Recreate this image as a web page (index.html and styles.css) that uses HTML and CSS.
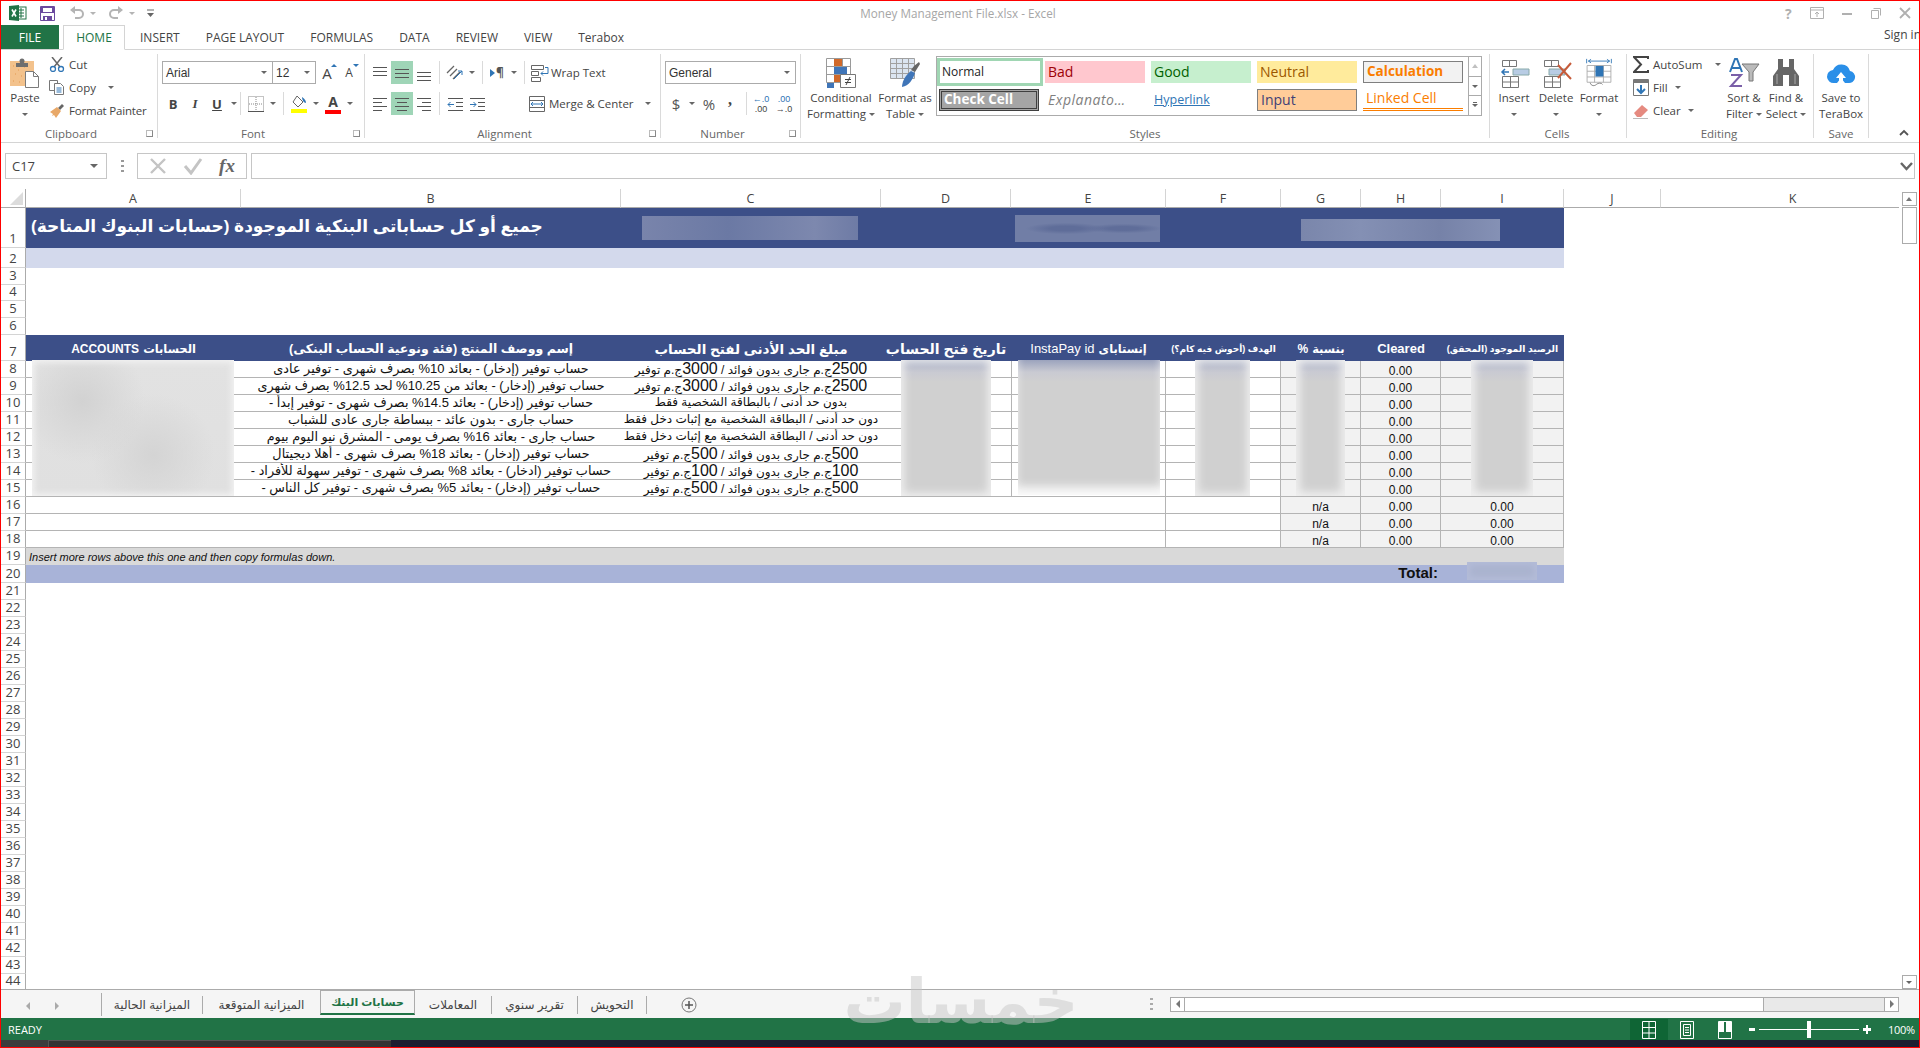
FILE: index.html
```html
<!DOCTYPE html>
<html lang="en">
<head>
<meta charset="utf-8">
<title>Money Management File.xlsx - Excel</title>
<link rel="stylesheet" href="styles.css">
</head>
<body>
<div class="window">

  <header class="titlebar">
    <div class="qat">
      <svg class="q-xl" width="18" height="16" viewBox="0 0 18 16"><rect x="7" y="2" width="10" height="12" fill="#fff" stroke="#217346"/><path d="M9 5h6M9 8h6M9 11h6M12 3v10" stroke="#217346"/><path d="M0 1l10-1v16L0 15z" fill="#217346"/><path d="M3 4.500l4 7M7 4.500l-4 7" stroke="#fff" stroke-width="1.600"/></svg>
      <svg class="q-save" width="15" height="15" viewBox="0 0 15 15"><path d="M.5.5h14v14H.5z" fill="#fff" stroke="#6b4a9e"/><path d="M1 1h13v6H1zM3 10h9v5H3z" fill="#6b4a9e"/><path d="M3 2h9v4H3z" fill="#fff"/><path d="M5 11h2v3H5z" fill="#fff"/></svg>
      <svg class="q-undo" width="14" height="14" viewBox="0 0 14 14"><path d="M4 4h5a4 4 0 0 1 0 8H5" fill="none" stroke="#b4b4b4" stroke-width="2"/><path d="M5 0v8L0 4z" fill="#b4b4b4"/></svg>
      <span class="dd q-d1 light"></span>
      <svg class="q-redo" width="14" height="14" viewBox="0 0 14 14"><path d="M10 4H5a4 4 0 0 0 0 8h4" fill="none" stroke="#b4b4b4" stroke-width="2"/><path d="M9 0v8l5-4z" fill="#b4b4b4"/></svg>
      <span class="dd q-d2 light"></span>
      <svg class="q-cust" width="7" height="9" viewBox="0 0 7 9"><path d="M0 1h7" stroke="#666"/><path d="M0 4h7L3.500 8z" fill="#666"/></svg>
    </div>
    <div class="doc-title">Money Management File.xlsx - Excel</div>
    <div class="winbtns">
      <span class="wb-help">?</span>
      <svg width="14" height="12" viewBox="0 0 14 12"><path d="M.5.5h13v11H.500zM1 3h12" fill="none" stroke="#b0b0b0"/><path d="M7 10V5M5 7l2-2 2 2" fill="none" stroke="#b0b0b0"/></svg>
      <svg width="10" height="12" viewBox="0 0 10 12"><path d="M0 7h10" stroke="#b0b0b0" stroke-width="2"/></svg>
      <svg width="10" height="12" viewBox="0 0 10 12"><path d="M2.500 1.500h7v7M.5 3.500h7v8h-7z" fill="none" stroke="#b0b0b0"/></svg>
      <svg width="12" height="12" viewBox="0 0 12 12"><path d="M1 1l10 10M11 1L1 11" stroke="#b0b0b0" stroke-width="1.800"/></svg>
    </div>
  </header>

  <nav class="tabs">
    <div class="tab-file">FILE</div>
    <div class="tab tab-on">HOME</div>
    <div class="tab">INSERT</div>
    <div class="tab">PAGE LAYOUT</div>
    <div class="tab">FORMULAS</div>
    <div class="tab">DATA</div>
    <div class="tab">REVIEW</div>
    <div class="tab">VIEW</div>
    <div class="tab">Terabox</div>
    <div class="signin">Sign in</div>
  </nav>

  <section class="ribbon">

    <div class="group g-clip">
      <div class="body">
        <div class="big w-paste">
          <svg width="30" height="30" viewBox="0 0 30 30"><rect y="3" width="24" height="25" fill="#f3c28c"/><path d="M3 8h1M8 12h1M14 9h1M5 16h1M11 18h1M17 14h1M3 23h1M9 24h1M15 22h1" stroke="#e39a50"/><path d="M6 5h12v4H6z" fill="#6e6e6e"/><circle cx="12" cy="3" r="2.500" fill="#6e6e6e"/><path d="M15.500 13.500h8l5 5v11h-13z" fill="#fff" stroke="#7b7b7b"/><path d="M23.500 13.500v5h5" fill="none" stroke="#7b7b7b"/></svg>
          <span class="lbl">Paste</span><span class="lbl"><i class="dd"></i></span>
        </div>
        <div class="list">
          <div class="li"><svg width="16" height="15" viewBox="0 0 16 15"><path d="M3 0l8 10M13 0L5 10" stroke="#666" stroke-width="1.500"/><circle cx="4" cy="12" r="2.500" fill="none" stroke="#2f75b5" stroke-width="1.300"/><circle cx="12" cy="12" r="2.500" fill="none" stroke="#2f75b5" stroke-width="1.300"/></svg>Cut</div>
          <div class="li"><svg width="16" height="15" viewBox="0 0 16 15"><path d="M.5.5h8v10h-8z" fill="#fff" stroke="#777"/><path d="M5.500 3.500h6l3 3v8h-9z" fill="#fff" stroke="#777"/><path d="M7.500 8h5M7.500 10h5M7.500 12h5" stroke="#2f75b5"/></svg>Copy<i class="dd dd-copy"></i></div>
          <div class="li"><svg width="16" height="15" viewBox="0 0 16 15"><path d="M9 5l4-4 2 2-4 4z" fill="#666"/><path d="M1 9l7-5 4 4-5 7-2-3-2 1 1-2z" fill="#e8a868"/></svg><span class="tight">Format Painter</span></div>
        </div>
      </div>
      <div class="gl">Clipboard<i class="launch"></i></div>
    </div>

    <div class="group g-font">
      <div class="body rows">
        <div class="row">
          <div class="combo c-font">Arial<i class="dd"></i></div>
          <div class="combo c-size">12<i class="dd"></i></div>
          <div class="b w22 grow">A<i class="up"></i></div>
          <div class="b w22 shrink">A<i class="down"></i></div>
        </div>
        <div class="row">
          <div class="b w22 bold">B</div>
          <div class="b w22 ital">I</div>
          <div class="b w22 undl">U</div>
          <div class="b w12"><i class="dd"></i></div>
          <i class="sep"></i>
          <div class="b w22 ml4"><svg width="16" height="16" viewBox="0 0 16 16"><path d="M.5.5h15v15H.500zM8 1v14M1 8h14" fill="none" stroke="#888" stroke-dasharray="1 1"/><path d="M0 15.500h16" stroke="#555"/></svg></div>
          <div class="b w12"><i class="dd"></i></div>
          <i class="sep ml4"></i>
          <div class="b w22 ml4"><svg width="18" height="18" viewBox="0 0 18 18"><path d="M7 1l6 6-5 5-5-5z" fill="#fff" stroke="#666"/><path d="M12 2c3 2 4 4 4 6-2 0-4-3-4-6z" fill="#2f75b5"/><path d="M1 14h16v4H1z" fill="#ff0"/></svg></div>
          <div class="b w12"><i class="dd"></i></div>
          <div class="b w22 colorA">A</div>
          <div class="b w12"><i class="dd"></i></div>
        </div>
      </div>
      <div class="gl">Font<i class="launch"></i></div>
    </div>

    <div class="group g-align">
      <div class="body rows">
        <div class="row">
          <div class="b w22"><svg width="16" height="12" viewBox="0 0 16 12"><path d="M1 .5h14M1 4.500h14M1 8.500h14" stroke="#555"/></svg></div>
          <div class="b w22 on"><svg width="16" height="12" viewBox="0 0 16 12"><path d="M1 2.500h14M1 6.500h14M1 10.500h14" stroke="#555"/></svg></div>
          <div class="b w22"><svg width="16" height="16" viewBox="0 0 16 16"><path d="M1 7.500h14M1 11.500h14M1 15.500h14" stroke="#555"/></svg></div>
          <i class="sep ml4"></i>
          <div class="b w22 ml4"><svg width="18" height="18" viewBox="0 0 18 18"><path d="M1 9l7-7M4 12l7-7M7 15l7-7" stroke="#666" stroke-width="1.300"/><path d="M8 15l8-8M16 7v4M16 7h-4" fill="none" stroke="#2f75b5"/></svg></div>
          <div class="b w12"><i class="dd"></i></div>
          <i class="sep ml4"></i>
          <div class="b w22 ml3 rtlp"><i class="tri"></i>¶</div>
          <div class="b w12"><i class="dd"></i></div>
          <i class="sep ml4"></i>
          <div class="wide wrapt"><svg width="18" height="18" viewBox="0 0 18 18"><path d="M.5 1.500h12v4H.5zM.5 7.500h7v4H.5zM.5 13.500h9v4H.5z" fill="none" stroke="#666"/><path d="M17 9.500h-7M12 7.500l-2 2 2 2M14 3.500h3v6" fill="none" stroke="#2f75b5"/></svg>Wrap Text</div>
        </div>
        <div class="row">
          <div class="b w22"><svg width="16" height="14" viewBox="0 0 16 14"><path d="M1 1.500h14M1 5.500h9M1 9.500h14M1 13.500h9" stroke="#555"/></svg></div>
          <div class="b w22 on"><svg width="16" height="14" viewBox="0 0 16 14"><path d="M1 1.500h14M3 5.500h10M1 9.500h14M3 13.500h10" stroke="#555"/></svg></div>
          <div class="b w22"><svg width="16" height="14" viewBox="0 0 16 14"><path d="M1 1.500h14M6 5.500h9M1 9.500h14M6 13.500h9" stroke="#555"/></svg></div>
          <i class="sep ml4"></i>
          <div class="b w22 ml4"><svg width="16" height="14" viewBox="0 0 16 14"><path d="M1 1.500h15M9 5.500h7M9 9.500h7M1 13.500h15" stroke="#555"/><path d="M7 7.500H1M3.500 5L1 7.500 3.500 10" fill="none" stroke="#2f75b5"/></svg></div>
          <div class="b w22"><svg width="16" height="14" viewBox="0 0 16 14"><path d="M1 1.500h15M9 5.500h7M9 9.500h7M1 13.500h15" stroke="#555"/><path d="M1 7.500h6M4.500 5L7 7.500 4.500 10" fill="none" stroke="#2f75b5"/></svg></div>
          <div class="wide merge"><svg width="18" height="18" viewBox="0 0 18 18"><path d="M.5 1.500h15v15H.500zM.5 5.500h15M.5 12.500h15" fill="none" stroke="#666"/><path d="M2 9h12M4 7L2 9l2 2M12 7l2 2-2 2" fill="none" stroke="#2f75b5"/></svg>Merge &amp; Center<i class="dd dd-merge"></i></div>
        </div>
      </div>
      <div class="gl">Alignment<i class="launch"></i></div>
    </div>

    <div class="group g-num">
      <div class="body rows">
        <div class="row"><div class="combo c-gen">General<i class="dd"></i></div></div>
        <div class="row">
          <div class="b w22 big-s">$</div>
          <div class="b w10"><i class="dd"></i></div>
          <div class="b w24 big-s">%</div>
          <div class="b w18 comma">,</div>
          <i class="sep ml7"></i>
          <div class="b w22 ml3 dec"><i class="d-top">←.0</i><i>.00</i></div>
          <div class="b w22 ml1 dec"><i class="d-top">.00</i><i>→.0</i></div>
        </div>
      </div>
      <div class="gl">Number<i class="launch"></i></div>
    </div>

    <div class="group g-styles">
      <div class="body">
        <div class="big w64">
          <svg width="30" height="30" viewBox="0 0 30 30"><path d="M.5.5h24v24H.500zM.5 8.500h24M.5 16.500h24M8.500.5v24M16.500.5v24" fill="none" stroke="#9a9a9a"/><path d="M8 1h8v7H8z" fill="#d0692a"/><path d="M8 9h13v7H8z" fill="#3f75b8"/><path d="M8 17h6v7H8z" fill="#d0692a"/><path d="M1 25h7v5H1z" fill="#3f75b8"/><path d="M14.500 16.500h15v13h-15z" fill="#fff" stroke="#777"/><path d="M19 21.500h6M19 24.500h6M24 19l-4 8" stroke="#444"/></svg>
          <span class="lbl">Conditional</span><span class="lbl">Formatting<i class="dd dd-in"></i></span>
        </div>
        <div class="big w64">
          <svg width="30" height="30" viewBox="0 0 30 30"><path d="M.5.5h24v20H.500zM.5 5.500h24M.5 10.500h24M.5 15.500h24M6.500.5v20M12.500.5v20M18.500.5v20" fill="#dbe5f1" stroke="#a0a0a0"/><path d="M24 8l5-4 1 2-5 8-4-2z" fill="#666"/><path d="M12 29c0-7 5-13 9-16l4 2c-2 6-6 13-13 14z" fill="#3f75b8"/></svg>
          <span class="lbl">Format as</span><span class="lbl">Table<i class="dd dd-in"></i></span>
        </div>
        <div class="gallery">
          <div class="sg-grid">
            <div class="sg s-normal">Normal</div>
            <div class="sg s-bad">Bad</div>
            <div class="sg s-good">Good</div>
            <div class="sg s-neutral">Neutral</div>
            <div class="sg s-calc">Calculation</div>
            <div class="sg s-check">Check Cell</div>
            <div class="sg s-expl">Explanato…</div>
            <div class="sg s-link"><span>Hyperlink</span></div>
            <div class="sg s-input">Input</div>
            <div class="sg s-linked">Linked Cell</div>
          </div>
          <div class="sg-scroll">
            <div class="ss"><i class="ss-up"></i></div>
            <div class="ss"><i class="dd"></i></div>
            <div class="ss ss-more"><i class="dd"></i></div>
          </div>
        </div>
      </div>
      <div class="gl">Styles</div>
    </div>

    <div class="group g-cells">
      <div class="body">
        <div class="big w42">
          <svg width="30" height="30" viewBox="0 0 30 30"><path d="M3.500 2.500h14v6h-14zM10.500 2.500v6M3.500 18.500h16v11h-16zM3.500 24h16M11.500 18.500v11" fill="none" stroke="#777"/><path d="M14 11h16v6H14z" fill="#b8cce4" stroke="#8aa"/><path d="M10 14H3M6 11l-3 3 3 3" fill="none" stroke="#2f75b5" stroke-width="1.500"/></svg>
          <span class="lbl">Insert</span><span class="lbl"><i class="dd"></i></span>
        </div>
        <div class="big w42">
          <svg width="30" height="30" viewBox="0 0 30 30"><path d="M3.500 2.500h14v6h-14zM10.500 2.500v6M3.500 18.500h16v11h-16zM3.500 24h16M11.500 18.500v11" fill="none" stroke="#777"/><path d="M8 11h16v6H8z" fill="#b8cce4" stroke="#8aa"/><path d="M17 7l13 14M30 5L17 20" stroke="#c65b3a" stroke-width="2"/></svg>
          <span class="lbl">Delete</span><span class="lbl"><i class="dd"></i></span>
        </div>
        <div class="big w44">
          <svg width="30" height="34" viewBox="0 0 30 34"><path d="M1 1v5M29 1v5M3 3.500h24M6 1.500l-3 2 3 2M24 1.500l3 2-3 2" fill="none" stroke="#2f75b5"/><path d="M1.500 8.500h27v19h-27zM1.500 15h27M1.500 21.500h27M10 8.500v19M20 8.500v19" fill="none" stroke="#aaa"/><path d="M11 9h9v12h-9z" fill="#2f75b5"/><path d="M5 28c1 4 5 4 7 2s6-2 7 0" fill="none" stroke="#777"/></svg>
          <span class="lbl">Format</span><span class="lbl"><i class="dd"></i></span>
        </div>
      </div>
      <div class="gl">Cells</div>
    </div>

    <div class="group g-edit">
      <div class="body">
        <div class="list l-edit">
          <div class="li"><svg width="16" height="17" viewBox="0 0 16 17"><path d="M15 3V1H1l7 7.500L1 16h14v-2" fill="none" stroke="#444" stroke-width="2"/></svg>AutoSum<i class="dd dd-auto"></i></div>
          <div class="li"><svg width="16" height="17" viewBox="0 0 16 17"><path d="M.5.500h15v16H.500z" fill="#fff" stroke="#777"/><path d="M1 1h14v3H1z" fill="#777"/><path d="M8 6v8M4 10l4 4 4-4" fill="none" stroke="#2f75b5" stroke-width="2"/></svg>Fill<i class="dd dd-in"></i></div>
          <div class="li"><svg width="16" height="16" viewBox="0 0 16 16"><path d="M1 10l8-8 6 5-7 7H4z" fill="#e58a80"/><path d="M0 15.500h15" stroke="#bbb"/></svg>Clear<i class="dd dd-in"></i></div>
        </div>
        <div class="big w42">
          <svg width="30" height="30" viewBox="0 0 30 30"><path d="M1 14L6 1h2l5 13M3 10h8" fill="none" stroke="#2f75b5" stroke-width="2"/><path d="M2 17h10L2 28h11" fill="none" stroke="#7a5fa8" stroke-width="2"/><path d="M13 6h17l-6 8v9h-4v-9z" fill="#bbb" stroke="#777"/></svg>
          <span class="lbl">Sort &amp;</span><span class="lbl">Filter<i class="dd dd-in"></i></span>
        </div>
        <div class="big w42">
          <svg width="30" height="30" viewBox="0 0 30 30"><path d="M7 1h5v8h6V1h5v10l5 7v10H18v-11h-6v11H2V18l5-7z" fill="#666"/><path d="M6 16v10M24 16v10" stroke="#aaa"/></svg>
          <span class="lbl">Find &amp;</span><span class="lbl">Select<i class="dd dd-in"></i></span>
        </div>
      </div>
      <div class="gl">Editing</div>
    </div>

    <div class="group g-save">
      <div class="body">
        <div class="big w55">
          <svg class="cloud" width="28" height="24" viewBox="0 0 28 24"><path d="M7 22a6.500 6.500 0 0 1-1-13 9 9 0 0 1 17 1 6 6 0 0 1-2 12h-3l-4-5-4 5z" fill="#2a8fe8"/><path d="M14 11l-5 6h3v5h4v-5h3z" fill="#fff"/></svg>
          <span class="lbl">Save to</span><span class="lbl">TeraBox</span>
        </div>
      </div>
      <div class="gl">Save</div>
    </div>

    <svg class="collapse" width="10" height="7" viewBox="0 0 10 7"><path d="M1 6l4-4 4 4" fill="none" stroke="#555" stroke-width="1.800"/></svg>
  </section>

  <section class="formula">
    <div class="namebox">C17<i class="dd"></i></div>
    <div class="grip"></div>
    <div class="fbtns">
      <svg width="18" height="18" viewBox="0 0 18 18"><path d="M2 2l14 14M16 2L2 16" stroke="#c4c4c4" stroke-width="2.400"/></svg>
      <svg width="20" height="18" viewBox="0 0 20 18"><path d="M2 9l6 7L18 2" fill="none" stroke="#c4c4c4" stroke-width="3"/></svg>
      <span class="fx">fx</span>
    </div>
    <div class="finput"><svg width="13" height="9" viewBox="0 0 13 9"><path d="M1 1l5.500 6L12 1" fill="none" stroke="#666" stroke-width="2.400"/></svg></div>
  </section>

  <section class="sheetarea">
    <div class="sheet">
      <div class="corner"><i></i></div>
      <div class="ch">A</div><div class="ch">B</div><div class="ch">C</div><div class="ch">D</div><div class="ch">E</div><div class="ch">F</div><div class="ch">G</div><div class="ch">H</div><div class="ch">I</div><div class="ch">J</div><div class="ch">K</div>

      <div class="rh">1</div><div class="band-title" dir="rtl">جميع أو كل حساباتى البنكية الموجودة (حسابات البنوك المتاحة)</div>
      <div class="rh">2</div><div class="band-sub"></div>
      <div class="rh">3</div><div class="rh">4</div><div class="rh">5</div><div class="rh">6</div>

      <div class="rh">7</div>
      <div class="hd" dir="rtl"><span class="hd-ar">الحسابات</span> <span class="hd-en">ACCOUNTS</span></div>
      <div class="hd hd-b" dir="rtl">إسم ووصف المنتج (فئة ونوعية الحساب البنكى)</div>
      <div class="hd hd-c" dir="rtl">مبلغ الحد الأدنى لفتح الحساب</div>
      <div class="hd hd-d" dir="rtl">تاريخ فتح الحساب</div>
      <div class="hd" dir="rtl"><span class="hd-ar">إنستاباى</span> <span class="hd-en hd-ip">InstaPay id</span></div>
      <div class="hd hd-f" dir="rtl">الهدف (أحوش فيه كام؟)</div>
      <div class="hd" dir="rtl"><span class="hd-ar">بنسبة</span> <span class="hd-en">%</span></div>
      <div class="hd hd-cl">Cleared</div>
      <div class="hd hd-i" dir="rtl">الرصيد الموجود (المحقق)</div>

      <div class="rh">8</div><div class="c"></div><div class="c b-t" dir="rtl">حساب توفير (إدخار) - بعائد <span class="n">10%</span> بصرف شهرى - توفير عادى</div><div class="c c-t" dir="rtl"><span class="m">2500</span>ج.م جارى بدون فوائد / <span class="m">3000</span>ج.م توفير</div><div class="c"></div><div class="c vl vr"></div><div class="c vr"></div><div class="c g vr"></div><div class="c g vr num">0.00</div><div class="c g vr"></div>
      <div class="rh">9</div><div class="c"></div><div class="c b-t" dir="rtl">حساب توفير (إدخار) - بعائد من <span class="n">10.25%</span> لحد <span class="n">12.5%</span> بصرف شهرى</div><div class="c c-t" dir="rtl"><span class="m">2500</span>ج.م جارى بدون فوائد / <span class="m">3000</span>ج.م توفير</div><div class="c"></div><div class="c vl vr"></div><div class="c vr"></div><div class="c g vr"></div><div class="c g vr num">0.00</div><div class="c g vr"></div>
      <div class="rh">10</div><div class="c"></div><div class="c b-t" dir="rtl">حساب توفير (إدخار) - بعائد <span class="n">14.5%</span> بصرف شهرى - توفير إبدأ -</div><div class="c c-t" dir="rtl">بدون حد أدنى / بالبطاقة الشخصية فقط</div><div class="c"></div><div class="c vl vr"></div><div class="c vr"></div><div class="c g vr"></div><div class="c g vr num">0.00</div><div class="c g vr"></div>
      <div class="rh">11</div><div class="c"></div><div class="c b-t" dir="rtl">حساب جارى - بدون عائد - ببساطة جارى عادى للشباب</div><div class="c c-t" dir="rtl">دون حد أدنى / البطاقة الشخصية مع إثبات دخل فقط</div><div class="c"></div><div class="c vl vr"></div><div class="c vr"></div><div class="c g vr"></div><div class="c g vr num">0.00</div><div class="c g vr"></div>
      <div class="rh">12</div><div class="c"></div><div class="c b-t" dir="rtl">حساب جارى - بعائد <span class="n">16%</span> بصرف يومى - المشرق نيو اليوم بيوم</div><div class="c c-t" dir="rtl">دون حد أدنى / البطاقة الشخصية مع إثبات دخل فقط</div><div class="c"></div><div class="c vl vr"></div><div class="c vr"></div><div class="c g vr"></div><div class="c g vr num">0.00</div><div class="c g vr"></div>
      <div class="rh">13</div><div class="c"></div><div class="c b-t" dir="rtl">حساب توفير (إدخار) - بعائد <span class="n">18%</span> بصرف شهرى - أهلا ديجيتال</div><div class="c c-t" dir="rtl"><span class="m">500</span>ج.م جارى بدون فوائد / <span class="m">500</span>ج.م توفير</div><div class="c"></div><div class="c vl vr"></div><div class="c vr"></div><div class="c g vr"></div><div class="c g vr num">0.00</div><div class="c g vr"></div>
      <div class="rh">14</div><div class="c"></div><div class="c b-t" dir="rtl">حساب توفير (ادخار) - بعائد <span class="n">8%</span> بصرف شهرى - توفير سهولة للأفراد -</div><div class="c c-t" dir="rtl"><span class="m">100</span>ج.م جارى بدون فوائد / <span class="m">100</span>ج.م توفير</div><div class="c"></div><div class="c vl vr"></div><div class="c vr"></div><div class="c g vr"></div><div class="c g vr num">0.00</div><div class="c g vr"></div>
      <div class="rh">15</div><div class="c"></div><div class="c b-t" dir="rtl">حساب توفير (إدخار) - بعائد <span class="n">5%</span> بصرف شهرى - توفير كل الناس -</div><div class="c c-t" dir="rtl"><span class="m">500</span>ج.م جارى بدون فوائد / <span class="m">500</span>ج.م توفير</div><div class="c"></div><div class="c vl vr"></div><div class="c vr"></div><div class="c g vr"></div><div class="c g vr num">0.00</div><div class="c g vr"></div>
      <div class="rh">16</div><div class="c merged vr"></div><div class="c vr"></div><div class="c g vr num">n/a</div><div class="c g vr num">0.00</div><div class="c g vr num">0.00</div>
      <div class="rh">17</div><div class="c merged vr"></div><div class="c vr"></div><div class="c g vr num">n/a</div><div class="c g vr num">0.00</div><div class="c g vr num">0.00</div>
      <div class="rh">18</div><div class="c merged vr"></div><div class="c vr"></div><div class="c g vr num">n/a</div><div class="c g vr num">0.00</div><div class="c g vr num">0.00</div>
      <div class="rh">19</div><div class="note">Insert more rows above this one and then copy formulas down.</div>
      <div class="rh">20</div><div class="total">Total:</div>
      <div class="rh">21</div><div class="rh">22</div><div class="rh">23</div><div class="rh">24</div><div class="rh">25</div><div class="rh">26</div><div class="rh">27</div><div class="rh">28</div><div class="rh">29</div><div class="rh">30</div><div class="rh">31</div><div class="rh">32</div><div class="rh">33</div><div class="rh">34</div><div class="rh">35</div><div class="rh">36</div><div class="rh">37</div><div class="rh">38</div><div class="rh">39</div><div class="rh">40</div><div class="rh">41</div><div class="rh">42</div><div class="rh">43</div><div class="rh">44</div>

      <div class="smear t-c"></div><div class="smear t-e"></div><div class="smear t-g"></div><div class="smear t-total"></div>
      <div class="patch p-a"></div><div class="patch p-d"></div><div class="patch p-e"></div><div class="patch p-f"></div><div class="patch p-g"></div><div class="patch p-i"></div>
    </div>
    <aside class="vscroll">
      <div class="vbtn"><i class="ss-up"></i></div>
      <div class="vthumb"></div>
      <div class="vtrack"></div>
      <div class="vbtn"><i class="dd"></i></div>
    </aside>
  </section>

  <footer class="sheettabs">
    <div class="navs"><i class="nav-l"></i><i class="nav-r"></i></div>
    <div class="stabs">
      <div class="stab">الميزانية الحالية</div>
      <div class="stab">الميزانية المتوقعة</div>
      <div class="stab stab-on">حسابات البنك</div>
      <div class="stab">المعاملات</div>
      <div class="stab">تقرير سنوي</div>
      <div class="stab">التحويش</div>
    </div>
    <svg class="addsheet" width="16" height="16" viewBox="0 0 16 16"><circle cx="8" cy="8" r="7" fill="none" stroke="#777"/><path d="M8 4v8M4 8h8" stroke="#555" stroke-width="1.500"/></svg>
    <div class="hwrap">
      <div class="hgrip"></div>
      <div class="hscroll">
        <div class="hbtn"><i class="nav-l"></i></div>
        <div class="hthumb"></div>
        <div class="htrack"></div>
        <div class="hbtn hbtn-r"><i class="nav-r"></i></div>
      </div>
    </div>
  </footer>

  <div class="status">
    <div class="ready">READY</div>
    <div class="views">
      <div class="view view-on"><svg width="14" height="18" viewBox="0 0 14 18"><path d="M.5.500h13v17H.500zM.5 6.500h13M.5 12h13M7 .5v17" fill="none" stroke="#fff"/></svg></div>
      <div class="view"><svg width="14" height="18" viewBox="0 0 14 18"><path d="M.5.500h13v17H.500z" fill="none" stroke="#fff"/><path d="M3.500 3.500h7v11h-7zM5 6.500h4M5 9h4M5 11.500h4" fill="none" stroke="#fff"/></svg></div>
      <div class="view"><svg width="14" height="18" viewBox="0 0 14 18"><path d="M.5.500h13v17H.500z" fill="none" stroke="#fff"/><path d="M1 1h5v10H1zM8 1h5v10H8z" fill="#fff"/></svg></div>
    </div>
    <div class="zoombar">
      <i class="z-minus"></i>
      <div class="z-track"><i class="z-thumb"></i></div>
      <i class="z-plus"></i>
    </div>
    <div class="zoompct">100%</div>
  </div>
  <div class="taskbar"><i class="tk-a"></i><i class="tk-b"></i></div>

  <div class="watermark" dir="rtl">خمسات</div>
</div>
</body>
</html>
```

FILE: styles.css
```css
*{box-sizing:border-box}
html,body{margin:0;padding:0;height:100%;overflow:hidden}
body{font-family:"Open Sans","Liberation Sans","DejaVu Sans",sans-serif;font-size:12px;color:#444;background:#fff}
i{font-style:normal}
.window{width:1920px;height:1048px;border:1px solid #f00;display:flex;flex-direction:column;position:relative;overflow:hidden;background:#fff}

.dd{display:inline-block;width:0;height:0;border-left:3px solid transparent;border-right:3px solid transparent;border-top:3px solid #666}
.dd.light{border-top-color:#b4b4b4}

.titlebar{height:24px;flex:none;display:flex;align-items:center;position:relative}
.qat{display:flex;align-items:center;width:170px}
.q-xl{margin-left:8px}
.q-save{margin-left:13px}
.q-undo{margin-left:15px}
.q-d1{margin-left:6px}
.q-redo{margin-left:13px}
.q-d2{margin-left:6px}
.q-cust{margin-left:12px}
.doc-title{flex:1;text-align:center;color:#a6a6a6;font-size:11.700px;padding-right:40px}
.winbtns{display:flex;align-items:center;gap:0;width:134px;justify-content:space-between;padding-right:8px}
.wb-help{font-weight:700;color:#b0b0b0;font-size:14px}

.tabs{height:25px;flex:none;display:flex;align-items:stretch;border-bottom:1px solid #d4d4d4;font-size:12px;color:#444}
.tab-file{width:58px;background:#217346;color:#fff;display:flex;align-items:center;justify-content:center;margin-right:4px}
.tab{padding:0 13px;display:flex;align-items:center;white-space:nowrap}
.tab-on{color:#217346;border:1px solid #d4d4d4;border-bottom:1px solid #fff;height:25px;padding:0;width:62px;justify-content:center;background:#fff;margin-right:2px}
.signin{margin-left:auto;margin-right:-3px;display:flex;align-items:center;width:38px;white-space:nowrap;overflow:hidden;padding-bottom:6px}

.ribbon{height:93px;flex:none;display:flex;border-bottom:1px solid #d4d4d4;padding-top:4px;position:relative;background:#fff}
.group{height:84px;flex:none;border-right:1px solid #dadada;display:flex;flex-direction:column}
.g-clip{width:157px}
.g-font{width:207px}
.g-align{width:296px}
.g-num{width:140px}
.g-styles{width:689px}
.g-cells{width:137px}
.g-edit{width:187px}
.g-save{width:55px}
.body{height:72px;flex:none;display:flex}
.gl{height:16px;flex:none;line-height:16px;text-align:center;color:#666;font-size:11.500px;position:relative;white-space:nowrap}
.g-clip .gl,.g-font .gl,.g-align .gl,.g-num .gl{padding-right:16px}
.g-cells .gl,.g-edit .gl{padding-right:2px}
.launch{position:absolute;right:4px;top:4px;width:7px;height:7px;border:1px solid #888;border-top-color:#bbb;border-left-color:#bbb}
.collapse{position:absolute;right:10px;bottom:6px}

.big{display:flex;flex-direction:column;align-items:center;padding-top:4px;white-space:nowrap;flex:none}
.big svg{height:30px;margin-bottom:2px;overflow:visible}
.big .cloud{margin-top:3px;height:24px;margin-bottom:5px}
.lbl{display:flex;align-items:center;height:16px;line-height:16px;font-size:11.500px}
.w-paste{width:48px}
.w64{width:64px}
.w42{width:42px}
.w44{width:44px}
.w55{width:54px}
.g-styles .body{padding-left:8px}
.g-cells .body{padding-left:3px}
.dd-in{margin-left:3px}

.list{display:flex;flex-direction:column;margin-top:-1px}
.li{height:23px;display:flex;align-items:center;gap:4px;white-space:nowrap;font-size:11.500px}
.tight{letter-spacing:-.2px}
.dd-copy{margin-left:8px}
.dd-auto{margin-left:9px}
.l-edit{width:96px;padding-left:6px}

.rows{flex-direction:column;gap:8px;padding:7px 0 0 4px}
.row{height:23px;display:flex;align-items:center}
.b{height:23px;display:flex;align-items:center;justify-content:center;flex:none}
.w10{width:10px}.w12{width:12px}.w18{width:18px}.w22{width:22px}.w24{width:24px}
.ml1{margin-left:1px}.ml3{margin-left:3px}.ml4{margin-left:4px}.ml7{margin-left:7px}
.sep{width:1px;height:23px;background:#dadada;flex:none}
.on{background:#9fd5b7}
.combo{height:23px;border:1px solid #ababab;display:flex;align-items:center;justify-content:space-between;padding:0 5px 0 3px;color:#333;font-family:"Liberation Sans",sans-serif;font-size:12px;flex:none}
.c-font{width:111px}
.c-size{width:44px;margin-left:-1px;margin-right:1px}
.c-gen{width:131px}
.grow{font-size:15px;position:relative;padding-right:2px}
.shrink{font-size:12px;position:relative;padding-right:2px}
.up,.down{position:absolute;right:2px;top:3px;width:0;height:0;border-left:3px solid transparent;border-right:3px solid transparent}
.up{border-bottom:3px solid #2f75b5}
.down{border-top:3px solid #2f75b5}
.bold{font-weight:700;font-size:13px}
.ital{font-style:italic;font-size:13px;font-family:"Liberation Serif",serif;font-weight:700}
.undl{font-weight:700;font-size:13px;text-decoration:underline}
.colorA{font-weight:700;font-size:14px;position:relative;padding-bottom:4px}
.colorA::after{content:"";position:absolute;left:3px;right:3px;bottom:1px;height:4px;background:#f00}
.rtlp{color:#555;font-size:12px;font-weight:700}
.tri{width:0;height:0;border-top:4px solid transparent;border-bottom:4px solid transparent;border-left:5px solid #2f75b5;margin-right:1px}
.wide{display:flex;align-items:center;gap:3px;white-space:nowrap;font-size:11.500px}
.wrapt{margin-left:6px;gap:2px}
.merge{margin-left:41px;gap:2px}
.dd-merge{margin-left:9px}
.big-s{font-size:15px;color:#555}
.comma{font-size:16px;font-weight:800;font-family:"Liberation Serif",serif;padding-bottom:8px}
.dec{flex-direction:column;font-size:9px;line-height:10px;font-family:"Liberation Sans",sans-serif;color:#444}
.d-top{color:#2f75b5}

.gallery{width:546px;height:60px;margin:2px 0 0 -1px;border:1px solid #ababab;display:flex;flex:none}
.sg-grid{width:530px;display:grid;grid-template-columns:repeat(5,106px);grid-template-rows:29px 29px}
.sg{display:flex;align-items:center;padding:0 0 2px 3px;margin:4px 4px 3px 2px;font-size:14px;white-space:nowrap;overflow:hidden}
.sg:nth-child(n+6){margin:3px 4px 4px 2px}
.s-normal{margin:0;border:3px solid #a0d6b3;padding-left:2px;color:#222;font-size:12px;background:#fff;margin-top:1px}
.s-bad{background:#ffc7ce;color:#9c0006}
.s-good{background:#c6efce;color:#006100}
.s-neutral{background:#ffeb9c;color:#9c5700}
.s-calc{background:#f2f2f2;color:#fa7d00;font-weight:700;border:1px solid #7f7f7f;font-size:13.500px}
.sg.s-check{background:#a5a5a5;color:#fff;font-weight:700;border:3px double #3f3f3f;margin:3px 4px 4px 2px;font-size:13.500px;padding-left:2px}
.s-expl{color:#7f7f7f;font-style:italic;letter-spacing:.5px}
.s-link{color:#2f75b5;font-size:12.500px;text-decoration:underline}
.s-input{background:#fc9;color:#3f3f76;border:1px solid #7f7f7f}
.s-linked{color:#fa7d00;border-bottom:3px double #fa7d00}
.sg-scroll{flex:1;border-left:1px solid #ababab;display:flex;flex-direction:column;margin-left:1px}
.ss{flex:1;display:flex;align-items:center;justify-content:center;border-bottom:1px solid #ababab}
.ss:last-child{border-bottom:0}
.ss-more{position:relative}
.ss-more::before{content:"";position:absolute;top:6px;left:4px;right:4px;height:1px;background:#666}
.ss-up{width:0;height:0;border-left:3px solid transparent;border-right:3px solid transparent;border-bottom:4px solid #c0c0c0}

.formula{height:46px;flex:none;display:flex;padding:10px 0 0 4px}
.namebox{width:102px;height:26px;border:1px solid #c6c6c6;display:flex;align-items:center;justify-content:space-between;padding:0 8px 0 6px;font-size:13px;color:#444}
.namebox .dd{border-left-width:4px;border-right-width:4px;border-top-width:4px}
.grip{width:3px;height:12px;margin:7px 13px 0 14px;background:repeating-linear-gradient(#999 0 2px,transparent 2px 5px)}
.fbtns{width:110px;height:26px;border:1px solid #c6c6c6;display:flex;align-items:center;justify-content:space-around;padding:0 3px}
.fx{font-family:"Liberation Serif",serif;font-style:italic;font-weight:700;font-size:19px;color:#666}
.finput{width:1664px;height:26px;margin-left:4px;border:1px solid #c6c6c6;display:flex;align-items:center;justify-content:flex-end;padding-right:1px}

.sheetarea{height:801px;flex:none;display:flex;border-bottom:1px solid #ababab}
.sheet{width:1898px;height:800px;overflow:hidden;position:relative;display:grid;
  grid-template-columns:25px 215px 380px 260px 130px 155px 115px 80px 80px 123px 97px 264px;
  grid-template-rows:19px 40px 20px 17px 16px 17px 17px 26px repeat(12,17px) 18px repeat(23,17px) 16px;
  font-family:"Liberation Sans","DejaVu Sans",sans-serif}
.corner{border-right:1px solid #ababab;border-bottom:1px solid #ababab;position:relative}
.corner i{position:absolute;right:2px;bottom:2px;width:0;height:0;border-left:13px solid transparent;border-bottom:13px solid #dcdcdc}
.ch{border-right:1px solid #d4d4d4;border-bottom:1px solid #ababab;text-align:center;color:#444;font-size:12.500px;line-height:19px;font-family:"Open Sans",sans-serif}
.rh{grid-column:1;border-right:1px solid #ababab;border-bottom:1px solid #d4d4d4;color:#444;font-size:13px;display:flex;align-items:flex-end;justify-content:center;line-height:15px;padding-bottom:1px;font-family:"Open Sans",sans-serif}
.band-title{grid-column:2/11;background:#3c4f88;color:#fff;font-weight:700;font-size:17px;display:flex;align-items:center;justify-content:flex-end;padding:0 0 4px 5px;white-space:nowrap;overflow:hidden}
.band-sub{grid-column:2/11;background:#d3d9ec}
.hd{background:#3c4f88;color:#fff;font-weight:700;font-size:12px;display:flex;align-items:center;justify-content:center;gap:4px;white-space:nowrap;overflow:hidden;padding-top:1px}
.hd-ar{font-size:11.500px}
.hd-en{font-size:12px;font-weight:700}
.hd-ip{font-size:13px;font-weight:400}
.hd-b{font-size:12.500px}
.hd-c{font-size:13.500px}
.hd-d{font-size:14px}
.hd-f{font-size:9px}
.hd-cl{font-size:13px}
.hd-i{font-size:9.200px}
.c{border-bottom:1px solid #b4b4b4;display:flex;align-items:center;justify-content:center;white-space:nowrap;overflow:hidden;color:#111;font-size:12px;background:#fff;gap:0}
.b-t,.c-t{display:block;text-align:center;line-height:15px}
.b-t{font-size:12.800px}
.c-t{font-size:12px}
.n{font-size:13px}
.m{font-size:16px}
.g{background:#f2f2f2}
.vr{border-right:1px solid #b4b4b4}
.vl{border-left:1px solid #b4b4b4}
.num{font-size:12px;color:#111;padding-top:3px}
.merged{grid-column:2/7}
.note{grid-column:2/11;background:#d9d9d9;color:#111;font-style:italic;font-size:11px;display:flex;align-items:center;padding-left:3px;white-space:nowrap}
.total{grid-column:2/11;background:#a8b3d8;color:#111;font-weight:700;font-size:15px;text-align:right;padding-right:126px;line-height:16px}

.smear{position:absolute}
.t-c{left:641px;top:27px;width:216px;height:24px;background:linear-gradient(90deg,#7984ab,#6b79a4 40%,#7d88ae 80%,#6e7ba5)}
.t-e{left:1014px;top:26px;width:145px;height:27px;background:radial-gradient(ellipse at 35% 50%,#5f6d99 0 12%,transparent 30%),radial-gradient(ellipse at 75% 50%,#5f6d99 0 10%,transparent 25%),#717ea6}
.t-g{left:1300px;top:30px;width:199px;height:22px;background:linear-gradient(90deg,#7a86ab,#8490b4 30%,#7682a8 70%,#8591b5)}
.t-total{left:1466px;top:373px;width:70px;height:18px;background:#aab3cf;box-shadow:inset 0 0 6px 3px #b4bcd8}
.patch{position:absolute;top:171px;height:136px;box-shadow:inset 0 0 8px 3px #f0f0f0;background:linear-gradient(#9ba3bd 0,#c9cad2 12px,#d0d0d0 22px)}
.p-a{left:31px;width:202px;background:radial-gradient(circle at 25% 30%,#d2d2d2,transparent 35%),radial-gradient(circle at 60% 70%,#d4d4d4,transparent 40%),linear-gradient(#e2e2e2,#e0e0e0);box-shadow:inset 0 0 6px 2px #f4f4f4}
.p-d{left:900px;width:90px}
.p-e{left:1017px;width:142px;height:135px;box-shadow:inset 0 -10px 10px -2px #fafafa}
.p-f{left:1194px;width:55px}
.p-g{left:1295px;width:49px;box-shadow:inset 0 0 8px 4px #f0f0f0}
.p-i{left:1470px;width:62px;box-shadow:inset 0 0 8px 4px #f0f0f0}

.vscroll{width:20px;flex:none;display:flex;flex-direction:column;align-items:center;padding:3px 2px 0;background:#fff}
.vbtn{width:15px;height:14px;flex:none;border:1px solid #ababab;display:flex;align-items:center;justify-content:center;background:#fff}
.vbtn .ss-up{border-bottom-color:#777}
.vthumb{width:15px;height:37px;flex:none;border:1px solid #ababab;background:#fff;margin-top:1px}
.vtrack{flex:1}

.sheettabs{height:28px;flex:none;display:flex;background:#f5f5f5;position:relative}
.navs{width:100px;display:flex;align-items:center;padding-left:25px;gap:25px;height:25px;margin-top:3px}
.nav-l,.nav-r{width:0;height:0;border-top:4px solid transparent;border-bottom:4px solid transparent}
.nav-l{border-right:4px solid #aaa}
.nav-r{border-left:4px solid #aaa}
.stabs{display:grid;grid-template-columns:101px 117px 95px 77px 86px 69px;height:23px;margin-top:3px;font-family:"Liberation Sans","DejaVu Sans",sans-serif;font-size:12px;color:#444;border-left:1px solid #ababab}
.stab{display:flex;align-items:center;justify-content:center;border-right:1px solid #ababab;white-space:nowrap;height:18px;align-self:center}
.stabs .stab:nth-child(2){border-right:0}
.stab-on{height:25px;margin-top:-3px;align-self:start;background:#f5f5f5;color:#217346;font-weight:700;font-size:11px;border:1px solid #ababab;border-bottom:2px solid #217346}
.addsheet{margin:7px 0 0 34px;flex:none}
.hwrap{margin-left:auto;display:flex;align-items:center;padding:2px 20px 2px 0;height:26px;margin-top:1px}
.hgrip{width:3px;height:13px;margin-right:17px;background:repeating-linear-gradient(#aaa 0 2px,transparent 2px 5px)}
.hscroll{width:729px;height:15px;display:flex;border:1px solid #ababab;background:#fff}
.hbtn{width:14px;display:flex;align-items:center;justify-content:center;flex:none;border-right:1px solid #ababab;background:#fff}
.hbtn .nav-l,.hbtn .nav-r{border-left-color:#777;border-right-color:#777}
.hbtn-r{border-right:0;border-left:1px solid #ababab}
.hthumb{width:579px;background:#fff;border-right:1px solid #ababab}
.htrack{flex:1;background:#e9e9e9}

.status{height:22px;flex:none;background:#217346;color:#fff;display:flex;align-items:center;font-size:11px}
.ready{padding-left:7px;width:1629px}
.views{display:flex;height:21px;margin-top:1px}
.view{width:38px;display:flex;align-items:center;justify-content:center}
.view-on{background:#0f6535}
.zoombar{display:flex;align-items:center;margin-left:5px;width:124px}
.z-minus{width:6px;height:3px;background:#fff;flex:none}
.z-track{width:100px;height:1px;background:#fff;margin:0 4px;position:relative}
.z-thumb{position:absolute;left:48px;top:-8px;width:4px;height:17px;background:#fff}
.z-plus{width:8px;height:3px;background:#fff;position:relative}
.z-plus::after{content:"";position:absolute;left:3px;top:-3px;width:2px;height:9px;background:#fff}
.zoompct{margin-left:15px;font-size:11px;letter-spacing:-.3px}

.taskbar{flex:1;background:#1d1d30;position:relative;display:flex}
.tk-a{width:47px;background:#3c3c3c}
.tk-b{width:343px;background:#333;border-top:1px solid #555;border-left:1px solid #555}

.watermark{position:absolute;left:835px;top:969px;width:250px;text-align:center;color:rgba(200,200,200,.5);font-family:"DejaVu Sans",sans-serif;font-weight:700;font-size:62px;line-height:64px;pointer-events:none;white-space:nowrap}
```
